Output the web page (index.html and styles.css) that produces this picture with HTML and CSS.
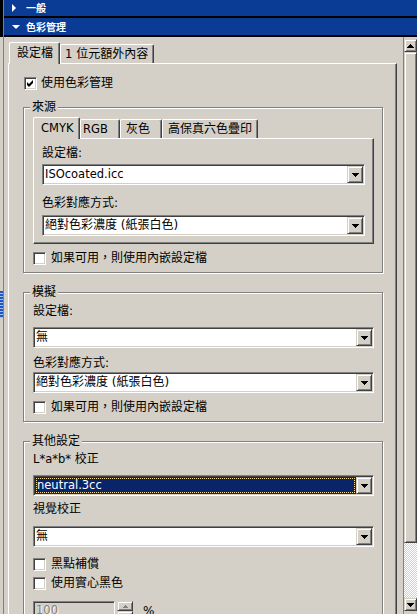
FILE: index.html
```html
<!DOCTYPE html>
<html lang="zh-Hant">
<head>
   <meta charset="UTF-8">
   <meta name="viewport" content="width=device-width, initial-scale=1.0">
   <title>色彩管理</title>
   <link rel="stylesheet" href="styles.css">
</head>
<body>
<div class="app">
   <div class="side">
      <div class="side-top"></div>
      <div class="sash"></div>
   </div>

   <div class="main">
      <div class="bar bar-first"><span class="arrow"><span class="tri-right"></span></span>一般</div>
      <div class="bar"><span class="arrow"><span class="tri-down"></span></span>色彩管理</div>

      <div class="work">
         <div class="content">
            <!-- 上方分頁 -->
            <div class="tabs">
               <div class="tab active tab-profile">設定檔</div>
               <div class="tab tab-bits"><span class="lat">1</span> 位元額外內容</div>
            </div>

            <div class="page">
               <label class="check check-top"><span class="box"><svg width="11" height="11" viewBox="0 0 11 11"><polygon points="2,4 4,6 8,2 8,5 4,9 2,7" fill="#000"/></svg></span>使用色彩管理</label>

               <!-- 來源 -->
               <fieldset class="group mt-10">
                  <legend>來源</legend>
                  <div class="tabs tabs-inner">
                     <div class="tab active tab-cmyk"><span class="lat">CMYK</span></div>
                     <div class="tab tab-rgb"><span class="lat">RGB</span></div>
                     <div class="tab tab-gray">灰色</div>
                     <div class="tab tab-hifi">高保真六色疊印</div>
                  </div>
                  <div class="page inner-page">
                     <div class="lbl">設定檔:</div>
                     <div class="select mt-3">
                        <span class="value lat">ISOcoated.icc</span>
                        <span class="drop"><svg width="7" height="4" viewBox="0 0 7 4"><polygon points="0,0 7,0 7,1 6,1 6,2 5,2 5,3 4,3 4,4 3,4 3,3 2,3 2,2 1,2 1,1 0,1" fill="#000"/></svg></span>
                     </div>
                     <div class="lbl mt-10">色彩對應方式:</div>
                     <div class="select mt-4">
                        <span class="value">絕對色彩濃度 (紙張白色)</span>
                        <span class="drop"><svg width="7" height="4" viewBox="0 0 7 4"><polygon points="0,0 7,0 7,1 6,1 6,2 5,2 5,3 4,3 4,4 3,4 3,3 2,3 2,2 1,2 1,1 0,1" fill="#000"/></svg></span>
                     </div>
                  </div>
                  <label class="check mt-8"><span class="box"></span>如果可用，則使用內嵌設定檔</label>
               </fieldset>

               <!-- 模擬 -->
               <fieldset class="group mt-12 pad-4">
                  <legend>模擬</legend>
                  <div class="lbl">設定檔:</div>
                  <div class="select mt-8">
                     <span class="value">無</span>
                     <span class="drop"><svg width="7" height="4" viewBox="0 0 7 4"><polygon points="0,0 7,0 7,1 6,1 6,2 5,2 5,3 4,3 4,4 3,4 3,3 2,3 2,2 1,2 1,1 0,1" fill="#000"/></svg></span>
                  </div>
                  <div class="lbl mt-7">色彩對應方式:</div>
                  <div class="select mt-1">
                     <span class="value">絕對色彩濃度 (紙張白色)</span>
                     <span class="drop"><svg width="7" height="4" viewBox="0 0 7 4"><polygon points="0,0 7,0 7,1 6,1 6,2 5,2 5,3 4,3 4,4 3,4 3,3 2,3 2,2 1,2 1,1 0,1" fill="#000"/></svg></span>
                  </div>
                  <label class="check mt-8"><span class="box"></span>如果可用，則使用內嵌設定檔</label>
               </fieldset>

               <!-- 其他設定 -->
               <fieldset class="group mt-12">
                  <legend>其他設定</legend>
                  <div class="lbl"><span class="lat">L*a*b*</span> 校正</div>
                  <div class="select focused mt-8">
                     <span class="value lat">neutral.3cc</span>
                     <span class="drop"><svg width="7" height="4" viewBox="0 0 7 4"><polygon points="0,0 7,0 7,1 6,1 6,2 5,2 5,3 4,3 4,4 3,4 3,3 2,3 2,2 1,2 1,1 0,1" fill="#000"/></svg></span>
                  </div>
                  <div class="lbl mt-5">視覺校正</div>
                  <div class="select mt-9">
                     <span class="value">無</span>
                     <span class="drop"><svg width="7" height="4" viewBox="0 0 7 4"><polygon points="0,0 7,0 7,1 6,1 6,2 5,2 5,3 4,3 4,4 3,4 3,3 2,3 2,2 1,2 1,1 0,1" fill="#000"/></svg></span>
                  </div>
                  <label class="check mt-11"><span class="box"></span>黑點補償</label>
                  <label class="check mt-6"><span class="box"></span>使用實心黑色</label>
                  <div class="spin-row mt-11">
                     <div class="spin-input lat">100</div>
                     <div class="spin-btns">
                        <span class="spin-btn"><svg width="5" height="3" viewBox="0 0 5 3"><polygon points="2,0 3,0 3,1 4,1 4,2 5,2 5,3 0,3 0,2 1,2 1,1 2,1" fill="#808080"/></svg></span>
                        <span class="spin-btn"></span>
                     </div>
                     <span class="pct">%</span>
                  </div>
               </fieldset>
            </div>
         </div>

         <!-- 捲軸 -->
         <div class="scroll">
            <div class="sb-btn"><svg width="7" height="4" viewBox="0 0 7 4"><polygon points="3,0 4,0 4,1 5,1 5,2 6,2 6,3 7,3 7,4 0,4 0,3 1,3 1,2 2,2 2,1 3,1" fill="#000"/></svg></div>
            <div class="sb-thumb"></div>
            <div class="sb-track"></div>
            <div class="sb-btn"><svg width="7" height="4" viewBox="0 0 7 4"><polygon points="0,0 7,0 7,1 6,1 6,2 5,2 5,3 4,3 4,4 3,4 3,3 2,3 2,2 1,2 1,1 0,1" fill="#000"/></svg></div>
         </div>
      </div>
   </div>
</div>
</body>
</html>
```

FILE: styles.css
```css
* {
   box-sizing: border-box;
}

body {
   margin: 0;
   height: 614px;
   overflow: hidden;
   background-color: #d4d0c8;
   font-family: "DejaVu Sans", "Noto Sans CJK TC", sans-serif;
   font-size: 12px;
   color: #000;
}

.lat {
   font-size: 11.5px;
}

.app {
   display: flex;
   height: 614px;
}

/* 左側邊條 */
.side {
   width: 4px;
   flex-shrink: 0;
   border-right: 1px solid #808080;
}

.side-top {
   height: 37px;
   background-color: #000;
}

.sash {
   margin-top: 254px;
   height: 27px;
   background: repeating-linear-gradient(#1f56c0 0 2px, #a4bdee 2px 3px);
}

.main {
   flex: 1;
   min-width: 0;
   display: flex;
   flex-direction: column;
}

/* 藍色標題列 */
.bar {
   height: 19px;
   display: flex;
   align-items: center;
   padding-left: 8px;
   background-color: #0a3c96;
   border-bottom: 2px solid #000;
   color: #fff;
   font-family: "Noto Sans CJK TC", sans-serif;
   font-weight: bold;
   font-size: 10px;
   line-height: 12px;
}

.bar-first {
   height: 18px;
}

.arrow {
   width: 14px;
   display: flex;
   align-items: center;
}

.tri-right {
   border-left: 4px solid #fff;
   border-top: 4px solid transparent;
   border-bottom: 4px solid transparent;
}

.tri-down {
   border-top: 4px solid #fff;
   border-left: 4px solid transparent;
   border-right: 4px solid transparent;
}

.work {
   flex: 1;
   min-height: 0;
   display: flex;
}

.content {
   flex: 1;
   min-width: 0;
   padding: 5px 6px 0 4px;
}

/* 分頁 */
.tabs {
   display: flex;
   align-items: flex-end;
   padding-left: 1px;
}

.tabs-inner {
   padding-left: 0;
}

.tab {
   height: 19px;
   padding-top: 1px;
   line-height: 16px;
   white-space: nowrap;
   background-color: #d4d0c8;
   border: 1px solid #fff;
   border-right-color: #404040;
   border-bottom: 0;
   border-radius: 2px 2px 0 0;
   box-shadow: inset -1px 0 #808080;
}

.tab.active {
   height: 22px;
   padding-top: 2px;
   margin-bottom: -1px;
   position: relative;
   z-index: 1;
}

.tab-profile { width: 51px; padding-left: 7px; }
.tab-bits    { width: 94px; padding-left: 4px; }
.tab-cmyk    { width: 47px; padding-left: 7px; }
.tab-rgb     { width: 40px; padding-left: 2px; }
.tab-gray    { width: 42px; padding-left: 5px; }
.tab-hifi    { width: 96px; padding-left: 5px; }

.page {
   height: 560px;
   padding: 13px 13px 0 14px;
   border: 1px solid;
   border-color: #fff #404040 #404040 #fff;
   box-shadow: inset -1px -1px #808080;
}

.inner-page {
   height: auto;
   padding: 6px 8px 7px 8px;
}

/* 群組框 */
.group {
   margin: 0;
   min-width: 0;
   padding: 3px 8px 7px 9px;
   border: 1px solid #808080;
   box-shadow: inset 1px 1px #fff, 1px 1px #fff;
}

.group.pad-4 {
   padding-top: 4px;
}

.group legend {
   padding: 0 2px;
   margin-left: -3px;
   line-height: 14px;
   background-color: #d4d0c8;
}

.lbl {
   height: 16px;
   line-height: 16px;
   white-space: nowrap;
}

/* 下拉選單 */
.select {
   height: 21px;
   display: flex;
   padding: 1px;
   background-color: #fff;
   border: 1px solid;
   border-color: #808080 #fff #fff #808080;
   box-shadow: inset 1px 1px #404040, inset -1px -1px #d4d0c8;
}

.select .value {
   flex: 1;
   min-width: 0;
   padding-left: 1px;
   line-height: 17px;
   white-space: nowrap;
   overflow: hidden;
}

.select.focused .value {
   padding-left: 2px;
   background-color: #0a246a;
   color: #fff;
   outline: 1px dotted #f5db95;
   outline-offset: -2px;
}

.drop {
   width: 16px;
   height: 17px;
   display: flex;
   align-items: center;
   justify-content: center;
   background-color: #d4d0c8;
   border: 1px solid;
   border-color: #d4d0c8 #404040 #404040 #d4d0c8;
   box-shadow: inset 1px 1px #fff, inset -1px -1px #808080;
}

.drop svg, .sb-btn svg, .box svg {
   display: block;
}

/* 核取方塊 */
.check {
   height: 13px;
   display: flex;
   align-items: center;
   gap: 5px;
   line-height: 13px;
   white-space: nowrap;
}

.check-top {
   margin-left: 1px;
   gap: 4px;
}

.box {
   width: 13px;
   height: 13px;
   flex-shrink: 0;
   background-color: #fff;
   border: 1px solid;
   border-color: #808080 #fff #fff #808080;
   box-shadow: inset 1px 1px #404040, inset -1px -1px #d4d0c8;
}

/* 數值欄位 */
.spin-row {
   display: flex;
   align-items: flex-start;
}

.spin-input {
   width: 82px;
   height: 20px;
   padding-left: 2px;
   line-height: 16px;
   color: #808080;
   text-shadow: 1px 1px #fff;
   border: 1px solid;
   border-color: #808080 #fff #fff #808080;
   box-shadow: inset 1px 1px #404040, inset -1px -1px #d4d0c8;
}

.spin-btns {
   width: 16px;
   margin-left: 2px;
   display: flex;
   flex-direction: column;
}

.spin-btn {
   height: 10px;
   display: flex;
   align-items: center;
   justify-content: center;
   border: 1px solid;
   border-color: #d4d0c8 #404040 #404040 #d4d0c8;
   box-shadow: inset 1px 1px #fff, inset -1px -1px #808080;
}

.pct {
   margin-left: 10px;
   line-height: 20px;
}

/* 捲軸 */
.scroll {
   width: 14px;
   flex-shrink: 0;
   padding-top: 2px;
   border-left: 1px solid #808080;
   display: flex;
   flex-direction: column;
}

.sb-btn, .sb-thumb {
   background-color: #d4d0c8;
   border: 1px solid;
   border-color: #d4d0c8 #404040 #404040 #d4d0c8;
   box-shadow: inset 1px 1px #fff, inset -1px -1px #808080;
}

.sb-btn {
   height: 13px;
   flex-shrink: 0;
   display: flex;
   align-items: center;
   justify-content: center;
}

.sb-thumb {
   height: 491px;
   flex-shrink: 0;
}

.sb-track {
   height: 55px;
   flex-shrink: 0;
   background: repeating-conic-gradient(#fff 0 25%, #d4d0c8 0 50%) 0 0 / 2px 2px;
}

.mt-1 { margin-top: 1px; }
.mt-3 { margin-top: 3px; }
.mt-4 { margin-top: 4px; }
.mt-5 { margin-top: 5px; }
.mt-6 { margin-top: 6px; }
.mt-7 { margin-top: 7px; }
.mt-8 { margin-top: 8px; }
.mt-9 { margin-top: 9px; }
.mt-10 { margin-top: 10px; }
.mt-11 { margin-top: 11px; }
.mt-12 { margin-top: 12px; }
```
